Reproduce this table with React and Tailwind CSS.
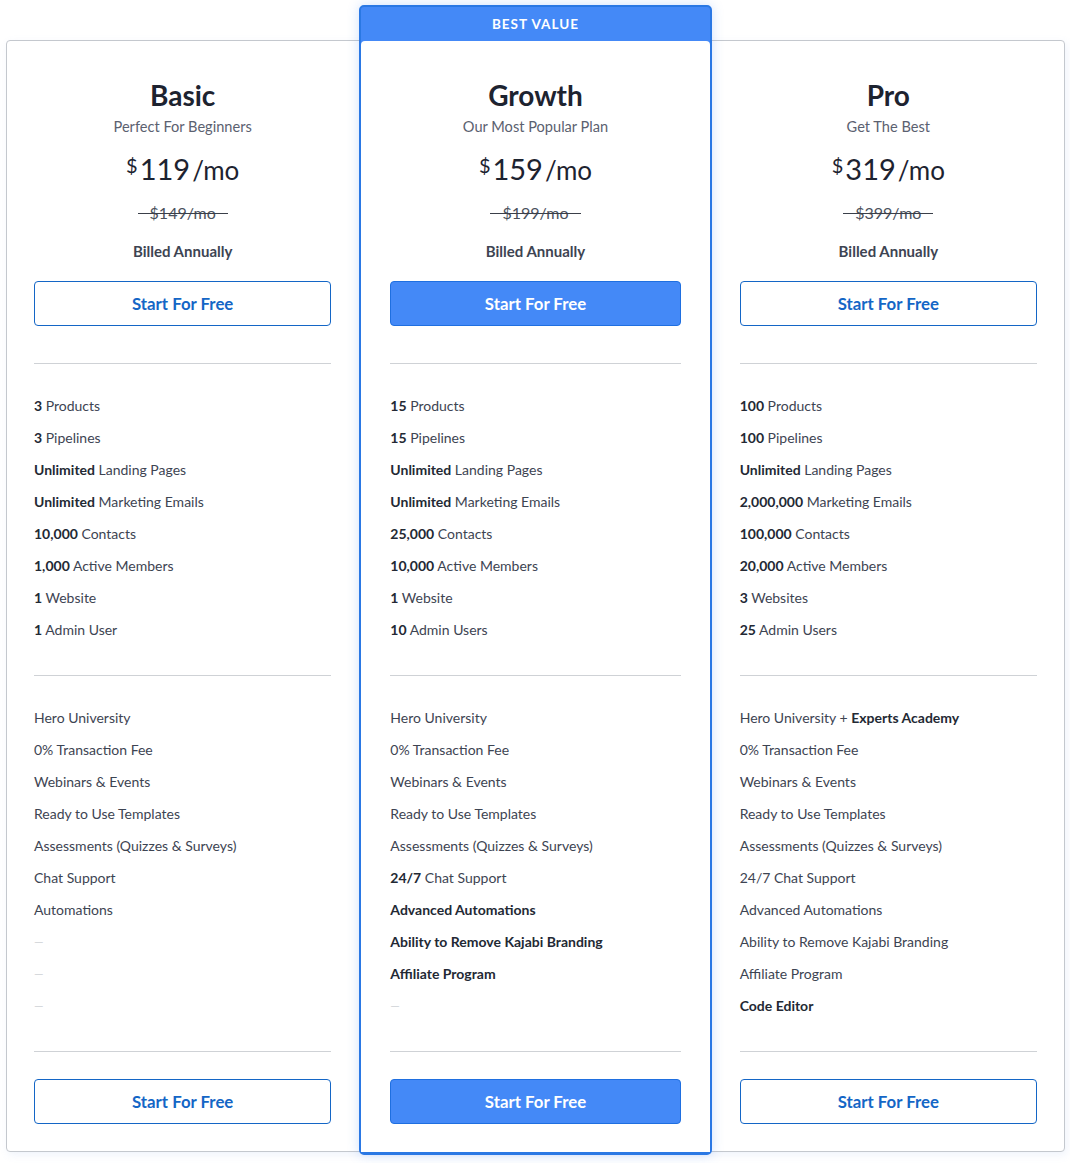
import React from 'react';

const plans = [
  {
    name: 'Basic',
    tagline: 'Perfect For Beginners',
    price: '119',
    was: '$149/mo',
    limits: [
      ['3', ' Products'],
      ['3', ' Pipelines'],
      ['Unlimited', ' Landing Pages'],
      ['Unlimited', ' Marketing Emails'],
      ['10,000', ' Contacts'],
      ['1,000', ' Active Members'],
      ['1', ' Website'],
      ['1', ' Admin User'],
    ],
    extras: [
      [null, 'Hero University'],
      [null, '0% Transaction Fee'],
      [null, 'Webinars & Events'],
      [null, 'Ready to Use Templates'],
      [null, 'Assessments (Quizzes & Surveys)'],
      [null, 'Chat Support'],
      [null, 'Automations'],
      'dash',
      'dash',
      'dash',
    ],
  },
  {
    name: 'Growth',
    tagline: 'Our Most Popular Plan',
    price: '159',
    was: '$199/mo',
    featured: true,
    limits: [
      ['15', ' Products'],
      ['15', ' Pipelines'],
      ['Unlimited', ' Landing Pages'],
      ['Unlimited', ' Marketing Emails'],
      ['25,000', ' Contacts'],
      ['10,000', ' Active Members'],
      ['1', ' Website'],
      ['10', ' Admin Users'],
    ],
    extras: [
      [null, 'Hero University'],
      [null, '0% Transaction Fee'],
      [null, 'Webinars & Events'],
      [null, 'Ready to Use Templates'],
      [null, 'Assessments (Quizzes & Surveys)'],
      ['24/7', ' Chat Support'],
      ['Advanced Automations', ''],
      ['Ability to Remove Kajabi Branding', ''],
      ['Affiliate Program', ''],
      'dash',
    ],
  },
  {
    name: 'Pro',
    tagline: 'Get The Best',
    price: '319',
    was: '$399/mo',
    limits: [
      ['100', ' Products'],
      ['100', ' Pipelines'],
      ['Unlimited', ' Landing Pages'],
      ['2,000,000', ' Marketing Emails'],
      ['100,000', ' Contacts'],
      ['20,000', ' Active Members'],
      ['3', ' Websites'],
      ['25', ' Admin Users'],
    ],
    extras: [
      [null, 'Hero University + ', 'Experts Academy'],
      [null, '0% Transaction Fee'],
      [null, 'Webinars & Events'],
      [null, 'Ready to Use Templates'],
      [null, 'Assessments (Quizzes & Surveys)'],
      [null, '24/7 Chat Support'],
      [null, 'Advanced Automations'],
      [null, 'Ability to Remove Kajabi Branding'],
      [null, 'Affiliate Program'],
      ['Code Editor', ''],
    ],
  },
];

function StartButton({ filled }) {
  return filled ? (
    <button className="w-full h-[45px] rounded-[4px] border border-[#1f6fe0] bg-[#4489f7] text-white text-[16.8px] font-bold">
      Start For Free
    </button>
  ) : (
    <button className="w-full h-[45px] rounded-[4px] border border-[#1466c6] bg-white text-[#1466c6] text-[16.8px] font-bold">
      Start For Free
    </button>
  );
}

function Feature({ item }) {
  // "dash" = feature not included in this plan
  if (item === 'dash') {
    return <li className="h-[32px] leading-[32px] text-[12px] text-[#cfd2d6]">—</li>;
  }
  const [bold, rest, boldTail] = item;
  return (
    <li className="h-[32px] leading-[32px] text-[14px] text-[#3d4452] whitespace-nowrap">
      {bold && <span className="font-bold text-[#232934]">{bold}</span>}
      {rest}
      {boldTail && <span className="font-bold text-[#232934]">{boldTail}</span>}
    </li>
  );
}

function PlanBody({ plan, padding }) {
  return (
    <div className={`flex flex-col pt-[38px] pb-[27px] ${padding}`}>
      <h2 className="text-center text-[28px] leading-[32px] font-bold text-[#1d2330]">{plan.name}</h2>
      <p className="mt-[6px] text-center text-[14.6px] leading-[20px] text-[#5b6170]">{plan.tagline}</p>

      <div className="mt-[12px] h-[40px] flex items-start justify-center text-[#1d2330]">
        <span className="text-[20px] leading-[26px] mt-[3px] mr-[2px]">$</span>
        <span className="text-[29px] leading-[40px]">{plan.price}</span>
        <span className="text-[26px] leading-[40px] ml-[2px] mt-[1px]">/mo</span>
      </div>

      <div className="mt-[12px] h-[24px] flex justify-center">
        <span className="relative px-[12px] text-[16px] leading-[24px] text-[#4a505c] after:absolute after:left-0 after:right-0 after:top-[12px] after:h-px after:bg-[#3a3f49]">
          {plan.was}
        </span>
      </div>

      <p className="mt-[16px] text-center text-[15px] leading-[20px] font-bold text-[#3d4452]">Billed Annually</p>

      <div className="mt-[20px]">
        <StartButton filled={plan.featured} />
      </div>

      <div className="mt-[37px] h-px bg-[#cfd2d6]" />

      <ul className="mt-[26px]">
        {plan.limits.map((f, i) => (
          <Feature key={i} item={f} />
        ))}
      </ul>

      <div className="mt-[29px] h-px bg-[#cfd2d6]" />

      <ul className="mt-[26px]">
        {plan.extras.map((f, i) => (
          <Feature key={i} item={f} />
        ))}
      </ul>

      <div className="mt-[29px] h-px bg-[#cfd2d6]" />

      <div className="mt-[27px]">
        <StartButton filled={plan.featured} />
      </div>
    </div>
  );
}

export default function App() {
  const [basic, growth, pro] = plans;
  return (
    <div
      className="w-[1070px] min-h-[1163px] bg-white pt-[40px] pl-[6px] pr-[5px]"
      style={{ fontFamily: 'Lato, "Open Sans", sans-serif' }}
    >
      <div className="grid grid-cols-3 border border-[#c4c8ce] rounded-[4px] bg-white shadow-[2px_3px_8px_rgba(120,160,220,0.12)]">
        <PlanBody plan={basic} padding="pl-[27px] pr-[28px]" />

        {/* featured card sticks out over the outer frame */}
        <div className="relative z-10 -mt-[36px] -mb-[4px] flex flex-col rounded-[5px] border-2 border-b-[3px] border-[#2a78e4] bg-[#4489f7] shadow-[0_0_12px_rgba(66,137,247,0.25)]">
          <div className="h-[34px] flex items-center justify-center text-white text-[13.5px] font-bold tracking-[1px]">
            BEST VALUE
          </div>
          <div className="flex-1 bg-white rounded-t-[4px]">
            <PlanBody plan={growth} padding="pl-[29px] pr-[29px]" />
          </div>
        </div>

        <PlanBody plan={pro} padding="pl-[28px] pr-[27px]" />
      </div>
    </div>
  );
}
